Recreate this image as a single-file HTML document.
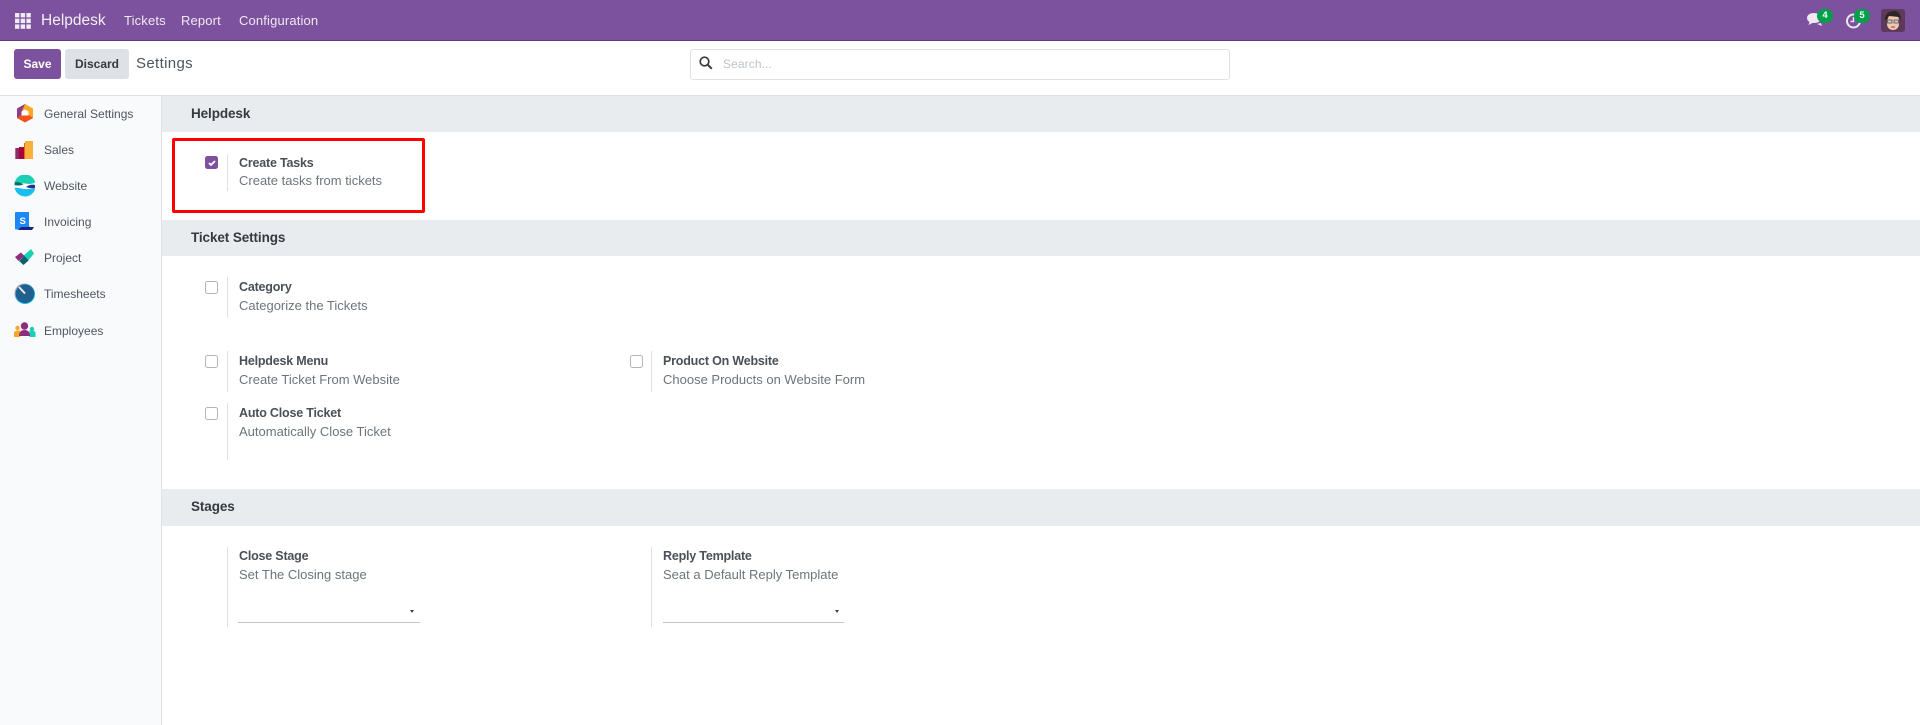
<!DOCTYPE html>
<html><head><meta charset="utf-8"><title>Settings</title>
<style>
html,body{margin:0;padding:0;background:#fff}
body{width:1920px;height:725px;position:relative;overflow:hidden;font-family:"Liberation Sans",sans-serif;font-size:13px;color:#4c4c4c}
.a{position:absolute;white-space:nowrap}
.t{font-weight:bold;color:#495057;font-size:12.5px;line-height:16px;letter-spacing:-.2px}
.d{color:#6c757d;font-size:13px;line-height:16px;letter-spacing:0}
.h{position:absolute;left:162px;width:1758px;background:#e9ecef}
.ht{font-weight:bold;color:#343a40;font-size:13.5px;line-height:16px;left:191px;letter-spacing:-.1px}
.cb{position:absolute;width:11px;height:11px;border:1px solid #b5b5b5;border-radius:2.5px;background:#fff}
.bar{position:absolute;width:1px;background:#dee2e6}
.n{color:#f0e9f0;font-size:13px;line-height:16px;top:13px;letter-spacing:.15px}
.s{color:#4f5660;font-size:12px;line-height:16px;left:44px;letter-spacing:0}
.line{position:absolute;height:1px;background:#c4c4c4}
.car{position:absolute;width:0;height:0;border-left:2.5px solid transparent;border-right:2.5px solid transparent;border-top:3px solid #444}
</style></head><body>
<div class="a" style="left:0;top:0;width:1920px;height:40px;background:#7c529e"></div>
<div class="a" style="left:0;top:40px;width:1920px;height:1px;background:#5f3d7e"></div>
<svg class="a" style="left:15px;top:13px" width="16" height="16" fill="#f1ebf3"><rect x="0" y="0" width="4.400" height="4.400"/><rect x="5.700" y="0" width="4.400" height="4.400"/><rect x="11.400" y="0" width="4.400" height="4.400"/><rect x="0" y="5.700" width="4.400" height="4.400"/><rect x="5.700" y="5.700" width="4.400" height="4.400"/><rect x="11.400" y="5.700" width="4.400" height="4.400"/><rect x="0" y="11.400" width="4.400" height="4.400"/><rect x="5.700" y="11.400" width="4.400" height="4.400"/><rect x="11.400" y="11.400" width="4.400" height="4.400"/></svg>
<div class="a" style="left:41px;top:12px;color:#f3eef5;font-size:15.500px;line-height:18px;letter-spacing:0">Helpdesk</div>
<div class="a n" style="left:124px">Tickets</div>
<div class="a n" style="left:181px">Report</div>
<div class="a n" style="left:239px">Configuration</div>

<svg class="a" style="left:1806px;top:10px" width="22" height="20"><path d="M8 3c-4 0-7 2-7 5 0 2 1 3 2.500 4l-1 3 4-2h2c4 0 6.500-2 6.500-5s-3-5-7-5z" fill="#eee8f2"/><path d="M11 14l5 2-1-3" fill="#eee8f2"/></svg>
<div class="a" style="left:1817px;top:9px;width:16px;height:14px;border-radius:7px;background:#00a04a;color:#fff;font-size:9.500px;font-weight:bold;line-height:14px;text-align:center">4</div>
<svg class="a" style="left:1845px;top:12px" width="18" height="18" fill="none" stroke="#eee8f2" stroke-width="2"><circle cx="8.500" cy="9" r="6.500"/><path d="M8.500 5v4.500h-3" stroke-width="1.500"/></svg>
<div class="a" style="left:1854px;top:9px;width:16px;height:14px;border-radius:7px;background:#00a04a;color:#fff;font-size:9.500px;font-weight:bold;line-height:14px;text-align:center">5</div>
<svg class="a" style="left:1881px;top:9px" width="24" height="23"><rect width="24" height="23" rx="3" fill="#5d3a5b"/><path d="M6 12c0-5 3-7 6-7s6 2 6 7v3c0 4-3 6-6 6s-6-2-6-6z" fill="#f2c7ae"/><path d="M4 11C4 4 9 2 13 2c5 0 7 4 7 9l-2-3-10-1-2 4z" fill="#2e2326"/><rect x="6.500" y="11" width="4.500" height="3" fill="#c8c8c8" stroke="#444" stroke-width=".7"/><rect x="13" y="11" width="4.500" height="3" fill="#c8c8c8" stroke="#444" stroke-width=".7"/><path d="M10 18h4" stroke="#8a4a4a"/></svg>

<div class="a" style="left:14px;top:49px;width:47px;height:30px;background:#7c529e;border-radius:3px;color:#fff;font-size:12px;font-weight:bold;line-height:30px;text-align:center">Save</div>
<div class="a" style="left:65px;top:49px;width:64px;height:30px;background:#dee2e6;border-radius:3px;color:#343a40;font-size:12px;font-weight:bold;line-height:30px;text-align:center">Discard</div>
<div class="a" style="left:136px;top:55px;color:#4c5560;font-size:15px;line-height:18px;letter-spacing:.35px">Settings</div>

<div class="a" style="left:690px;top:49px;width:538px;height:29px;border:1px solid #dee2e6;border-radius:3px;background:#fff"></div>
<svg class="a" style="left:699px;top:56px" width="14" height="14" fill="none" stroke="#343a40" stroke-width="1.700"><circle cx="5.500" cy="5.500" r="4.300"/><path d="M8.800 8.800l4 4" stroke-width="2"/></svg>
<div class="a" style="left:723px;top:56px;color:#bcc3cc;font-size:12px;line-height:16px;letter-spacing:.1px">Search...</div>

<div class="a" style="left:0;top:95px;width:1920px;height:1px;background:#dee2e6"></div>
<div class="a" style="left:0;top:96px;width:161px;height:629px;background:#f9fafb"></div>
<div class="a" style="left:161px;top:96px;width:1px;height:629px;background:#dee2e6"></div>

<!-- General Settings -->
<svg class="a" style="left:15px;top:103px" width="20" height="20"><path d="M10 1l8 4.500v9.500L10 19.500 2 15V5.500z" fill="#f9a825"/><path d="M10 1L2 5.500V15l5-2.500V8z" fill="#8e3d8a"/><path d="M2 15l8 4.500L18 15l-4-3H6z" fill="#f4511e"/><path d="M10 6.500l3.500 2v4h-7v-4z" fill="#fff"/></svg>
<div class="a s" style="top:106px">General Settings</div>
<!-- Sales -->
<svg class="a" style="left:15px;top:140px" width="19" height="20"><rect x="0.300" y="8" width="5" height="11" fill="#8e2d6e"/><rect x="4" y="7" width="5" height="12" fill="#a8003c"/><rect x="9" y="3" width="3" height="16" fill="#e8641b"/><rect x="10" y="1" width="8" height="18" fill="#fbb03b"/></svg>
<div class="a s" style="top:142px">Sales</div>
<!-- Website -->
<svg class="a" style="left:14px;top:175px" width="22" height="22"><path d="M.500 9a10.500 10.500 0 0 1 20.700-1.500C17 9.500 14 9 11 8.500 7 8 4 9 .500 9z" fill="#1ad0b4"/><path d="M.700 13a10.500 10.500 0 0 0 20.500.500c-4 .5-7 .5-10 .5-4 0-7-2-10.500-1z" fill="#18bdf2"/><path d="M.500 7.500c3-1 6 0 9 2-3 1-6 1.500-9 .5z" fill="#0e6d5e"/><path d="M21 10c-3-1-6 0-9 2 3 1 6 2 9 1z" fill="#27318f"/></svg>
<div class="a s" style="top:178px">Website</div>
<!-- Invoicing -->
<svg class="a" style="left:15px;top:212px" width="20" height="20"><path d="M0 1a1 1 0 0 1 1-1h13v14l4 3.500H1a1 1 0 0 1-1-1z" fill="#1e88f5"/><path d="M6 15h13l-2 3H3z" fill="#1a237e"/><text x="4.500" y="12" font-size="9.500" font-weight="bold" fill="#fff" font-family="Liberation Sans">S</text></svg>
<div class="a s" style="top:214px">Invoicing</div>
<!-- Project -->
<svg class="a" style="left:15px;top:249px" width="20" height="18"><path d="M7 8l9-8 3 4.500-7 8.500z" fill="#1ad0b4"/><path d="M0 8l6-4.500 3.500 3.500-6 5z" fill="#8e2d7e"/><path d="M4 12l5.500-5 4 4.500-5 4.500z" fill="#0e5f6e"/></svg>
<div class="a s" style="top:250px">Project</div>
<!-- Timesheets -->
<svg class="a" style="left:14px;top:283px" width="22" height="22"><circle cx="10.500" cy="10.500" r="10" fill="#f28b8b"/><circle cx="11" cy="11" r="10" fill="#18bdf2"/><circle cx="11" cy="10.800" r="9.300" fill="#20608f"/><path d="M5 4l6 6.500" stroke="#f5e9e9" stroke-width="2"/></svg>
<div class="a s" style="top:286px">Timesheets</div>
<!-- Employees -->
<svg class="a" style="left:14px;top:321px" width="22" height="18"><circle cx="3.500" cy="7" r="2.200" fill="#f9a825"/><circle cx="18" cy="8" r="2.200" fill="#1ad0b4"/><path d="M0 16v-4c0-2 2-2.500 6-2.500V16z" fill="#f9a825"/><path d="M21.500 16v-4c0-2-2-2.500-6-2.500V16z" fill="#1ad0b4"/><circle cx="10.500" cy="5" r="3.700" fill="#8e2d7e"/><path d="M5 15c0-4 2-6 5.500-6s5.500 2 5.500 6z" fill="#8e2d7e"/></svg>
<div class="a s" style="top:323px">Employees</div>

<div class="h" style="top:96px;height:36px"></div>
<div class="a ht" style="top:106px">Helpdesk</div>
<div class="a" style="left:172px;top:138px;width:247px;height:69px;border:3px solid #f00;border-radius:2px"></div>
<div class="cb" style="left:205px;top:156px;background:#7c529e;border-color:#7c529e"></div>
<svg class="a" style="left:207px;top:158px" width="10" height="10" fill="none" stroke="#fff" stroke-width="1.800"><path d="M2 5l2 2 4-4"/></svg>
<div class="bar" style="left:227px;top:154px;height:37px"></div>
<div class="a t" style="left:239px;top:155px">Create Tasks</div>
<div class="a d" style="left:239px;top:173px">Create tasks from tickets</div>

<div class="h" style="top:220px;height:36px"></div>
<div class="a ht" style="top:230px">Ticket Settings</div>

<div class="cb" style="left:205px;top:281px"></div>
<div class="bar" style="left:227px;top:277px;height:41px"></div>
<div class="a t" style="left:239px;top:279px">Category</div>
<div class="a d" style="left:239px;top:298px">Categorize the Tickets</div>

<div class="cb" style="left:205px;top:355px"></div>
<div class="bar" style="left:227px;top:351px;height:41px"></div>
<div class="a t" style="left:239px;top:353px">Helpdesk Menu</div>
<div class="a d" style="left:239px;top:372px">Create Ticket From Website</div>

<div class="cb" style="left:630px;top:355px"></div>
<div class="bar" style="left:651px;top:351px;height:41px"></div>
<div class="a t" style="left:663px;top:353px">Product On Website</div>
<div class="a d" style="left:663px;top:372px">Choose Products on Website Form</div>

<div class="cb" style="left:205px;top:407px"></div>
<div class="bar" style="left:227px;top:403px;height:57px"></div>
<div class="a t" style="left:239px;top:405px">Auto Close Ticket</div>
<div class="a d" style="left:239px;top:424px">Automatically Close Ticket</div>

<div class="h" style="top:489px;height:37px"></div>
<div class="a ht" style="top:499px">Stages</div>

<div class="bar" style="left:227px;top:547px;height:80px"></div>
<div class="a t" style="left:239px;top:548px">Close Stage</div>
<div class="a d" style="left:239px;top:567px">Set The Closing stage</div>
<div class="car" style="left:410px;top:610px"></div>
<div class="line" style="left:238px;top:622px;width:182px"></div>

<div class="bar" style="left:651px;top:547px;height:80px"></div>
<div class="a t" style="left:663px;top:548px">Reply Template</div>
<div class="a d" style="left:663px;top:567px">Seat a Default Reply Template</div>
<div class="car" style="left:835px;top:610px"></div>
<div class="line" style="left:663px;top:622px;width:181px"></div>
</body></html>
